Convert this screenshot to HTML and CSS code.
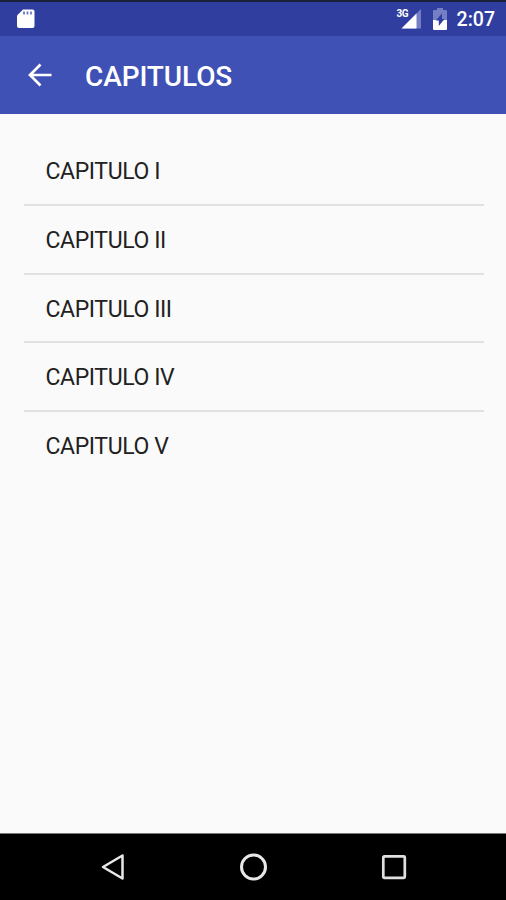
FILE: index.html
```html
<!DOCTYPE html>
<html lang="es">
<head>
    <meta charset="UTF-8">
    <meta name="viewport" content="width=device-width, initial-scale=1.0">
    <title>Capitulos</title>
    <link rel="stylesheet" href="styles.css">
</head>
<body>
    <div class="status-bar">
        <svg class="sd-icon" width="20" height="20" viewBox="0 0 20 20">
            <path d="M7 0.500h9.500a2 2 0 0 1 2 2v14.500a2 2 0 0 1-2 2H3a2 2 0 0 1-2-2V6.500z" fill="#fff"/>
            <path d="M8 2.500v3M11.500 2.500v3M15 2.500v3" stroke="#6f7bc0" stroke-width="1.800"/>
        </svg>
        <div class="status-right">
            <div class="signal">
                <span class="network">3G</span>
                <svg width="20" height="20" viewBox="0 0 20 20">
                    <path d="M20 0v19.500H0.500z" fill="#7480c3"/>
                    <path d="M15.500 4.500v15H0.500z" fill="#fff"/>
                </svg>
            </div>
            <svg class="battery" width="14" height="22" viewBox="0 0 14 22">
                <path d="M4 0h6v2h3a1 1 0 0 1 1 1v9H0V3a1 1 0 0 1 1-1h3z" fill="#7480c3"/>
                <path d="M0 12h14v9a1 1 0 0 1-1 1H1a1 1 0 0 1-1-1z" fill="#fff"/>
                <path d="M9 5.500v5.500h2.500L5.800 18v-5.500H2.800z" fill="#303f9f"/>
            </svg>
            <span class="clock">2:07</span>
        </div>
    </div>

    <div class="toolbar">
        <svg class="back-arrow" width="24" height="24" viewBox="0 0 24 24">
            <path d="M23.500 12H2M12.500 1.500L2 12l10.500 10.500" fill="none" stroke="#fff" stroke-width="2.700"/>
        </svg>
        <h1>CAPITULOS</h1>
    </div>

    <ul class="chapter-list">
        <li>CAPITULO I</li>
        <li>CAPITULO II</li>
        <li>CAPITULO III</li>
        <li>CAPITULO IV</li>
        <li>CAPITULO V</li>
    </ul>

    <div class="nav-bar">
        <svg width="28" height="28" viewBox="0 0 28 28">
            <path d="M24.500 2.500v23L5 14z" fill="none" stroke="#e8e8e8" stroke-width="2.500" stroke-linejoin="round"/>
        </svg>
        <svg width="28" height="28" viewBox="0 0 28 28">
            <circle cx="14.500" cy="14" r="12" fill="none" stroke="#e8e8e8" stroke-width="3"/>
        </svg>
        <svg width="28" height="28" viewBox="0 0 28 28">
            <rect x="3.300" y="3.300" width="21.500" height="21.500" rx="1" fill="none" stroke="#e0e0e0" stroke-width="2.700"/>
        </svg>
    </div>
</body>
</html>
```
FILE: styles.css
```css
* {
    box-sizing: border-box;
}

body {
    margin: 0;
    height: 100vh;
    display: flex;
    flex-direction: column;
    background-color: #fafafa;
    font-family: Roboto, sans-serif;
    overflow: hidden;
}

.status-bar {
    height: 36px;
    padding: 0 11px 0 16px;
    display: flex;
    justify-content: space-between;
    align-items: center;
    background-color: #303f9f;
    border-top: 2px solid #1a1f3a;
}

.status-right {
    display: flex;
    align-items: center;
}

.signal {
    position: relative;
    display: flex;
    margin-right: 12px;
}

.network {
    position: absolute;
    left: -4px;
    top: 0;
    font-size: 10px;
    line-height: 10px;
    font-weight: bold;
    letter-spacing: -0.5px;
    color: #fff;
}

.battery {
    margin-right: 10px;
}

.clock {
    margin-top: 1px;
    font-size: 19.5px;
    line-height: 24px;
    font-weight: 500;
    color: #fff;
}

.toolbar {
    height: 78px;
    padding-left: 28px;
    display: flex;
    align-items: center;
    background-color: #3f51b5;
}

.toolbar h1 {
    margin: 2px 0 0 33px;
    font-size: 28px;
    font-weight: 500;
    letter-spacing: -0.1px;
    color: #fff;
}

.chapter-list {
    flex: 1;
    margin: 0;
    padding: 23.2px 22px 0 24px;
    list-style: none;
}

.chapter-list li {
    height: 68.7px;
    padding-left: 21.5px;
    font-size: 23px;
    line-height: 69px;
    letter-spacing: -0.4px;
    color: #212121;
    border-bottom: 2px solid #e1e1e1;
}

.chapter-list li:last-child {
    border-bottom: none;
}

.nav-bar {
    height: 67px;
    padding: 0 98px;
    display: flex;
    justify-content: space-between;
    align-items: center;
    background-color: #000;
    border-top: 1px solid #777;
}
```
